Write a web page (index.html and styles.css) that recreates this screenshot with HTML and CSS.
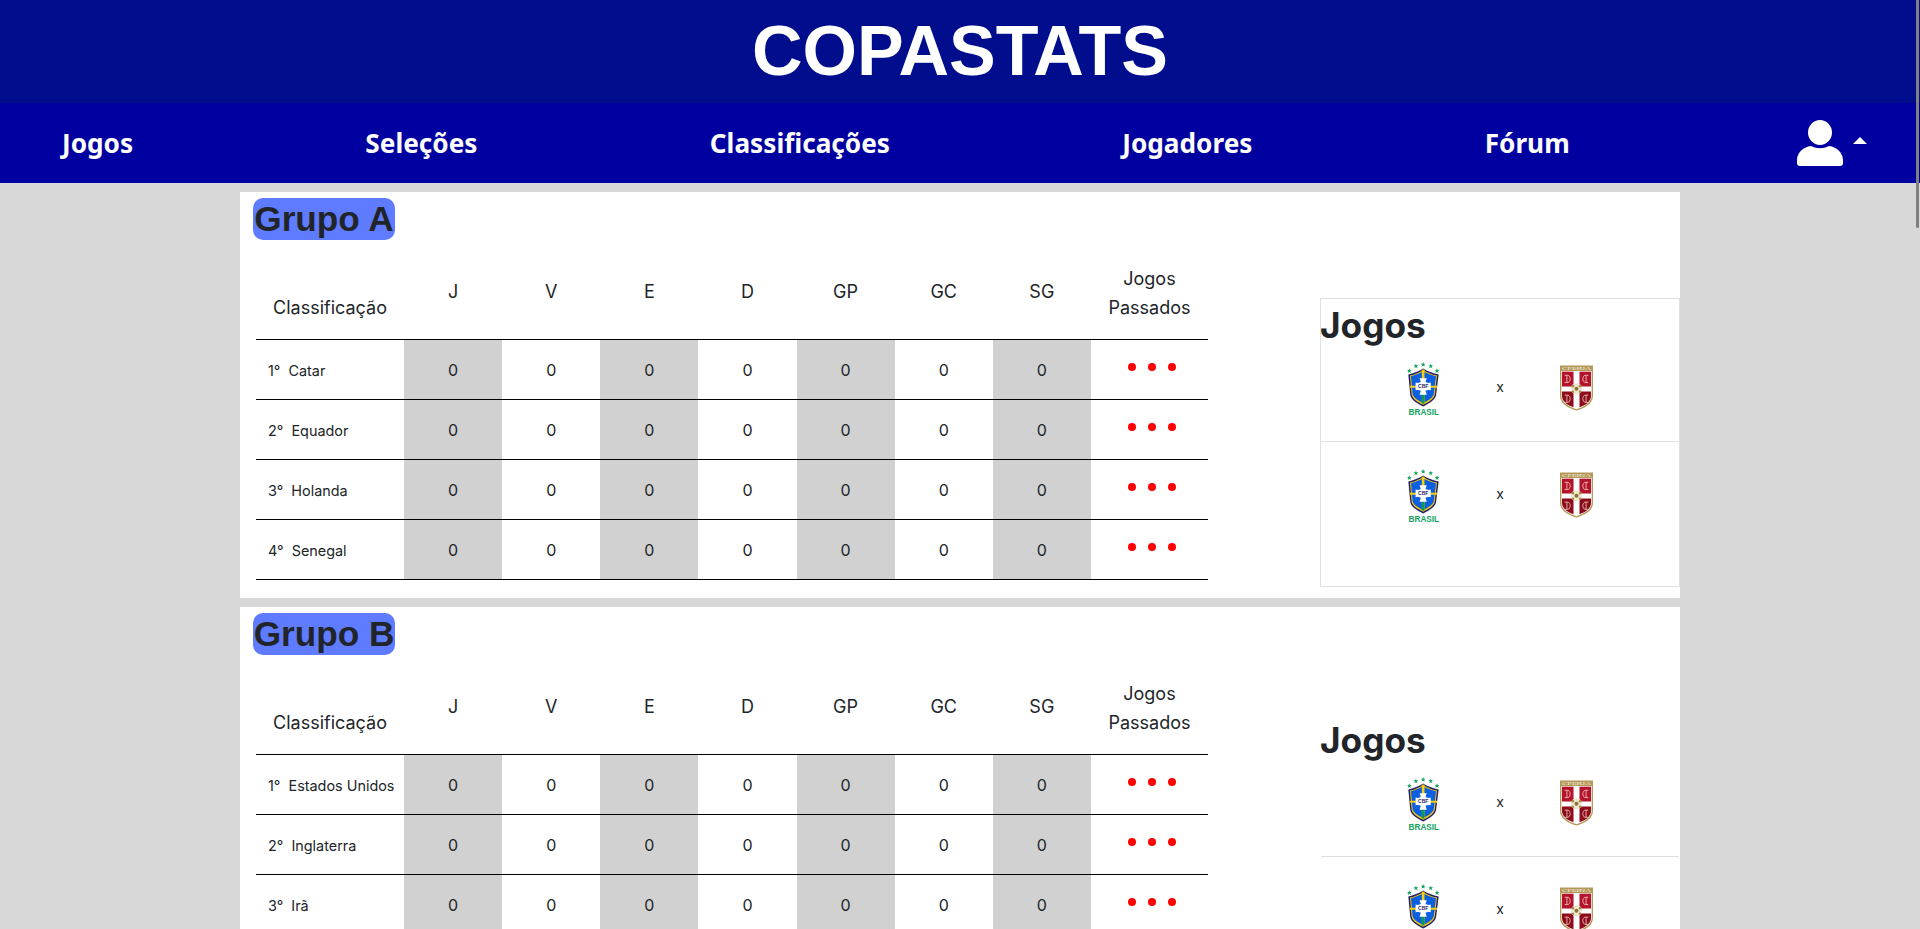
FILE: index.html
```html
<!DOCTYPE html>
<html lang="pt-BR">
<head>
    <meta charset="UTF-8">
    <meta name="viewport" content="width=device-width, initial-scale=1.0">
    <title>Copastats</title>
    <link rel="stylesheet" href="styles.css">
</head>
<body>
    <!-- escudos usados nos jogos -->
    <svg class="defs" width="0" height="0" aria-hidden="true">
        <defs>
            <g id="crest-brasil">
                <g fill="#12a35f">
                    <polygon points="6,18 8,23 13,23 9,27 11,32 6,29 1,32 3,27 -1,23 4,23"/>
                    <polygon points="26,4 28,9 33,9 29,13 31,18 26,15 21,18 23,13 19,9 24,9"/>
                    <polygon points="48,-1 50,4 55,4 51,8 53,13 48,10 43,13 45,8 41,4 46,4"/>
                    <polygon points="71,4 73,9 78,9 74,13 76,18 71,15 66,18 68,13 64,9 69,9"/>
                    <polygon points="90,18 92,23 97,23 93,27 95,32 90,29 85,32 87,27 83,23 88,23"/>
                </g>
                <path d="M48 19C36 27 18 34 3 37L9 100C12 115 32 126 48 134C64 126 84 115 87 100L95 37C78 34 60 27 48 19Z" fill="#221f6b"/>
                <path d="M48 23C37 30 22 37 8 40L13 98C16 112 35 122 48 129C61 122 80 112 83 98L90 40C74 37 59 30 48 23Z" fill="#f2c811"/>
                <path d="M48 27C38 33 24 39 11 42L16 97C19 109 37 118 48 124C59 118 77 109 80 97L87 42C72 39 58 33 48 27Z" fill="#0b5fe0"/>
                <rect x="44" y="22" width="8" height="103" fill="#f7cf12"/>
                <rect x="44" y="92" width="8" height="33" fill="#0c9a4e"/>
                <rect x="8" y="71" width="82" height="6" fill="#f7cf12"/>
                <path d="M37 48H59L55 60C60 63 66 63 71 61V85C66 83 60 83 55 86L59 98H37L41 86C36 83 30 83 25 85V61C30 63 36 63 41 60Z" fill="#fff"/>
            </g>
            <g id="crest-servia">
                <path d="M0 0H100V92C100 118 72 130 50 137C28 130 0 118 0 92Z" fill="#b3985a"/>
                <path d="M4 17H96V92C96 114 70 126 50 133C30 126 4 114 4 92Z" fill="#fff"/>
                <path d="M6 19H41V64H6Z" fill="#b5132b"/>
                <path d="M59 19H94V64H59Z" fill="#b5132b"/>
                <path d="M6 79H41V127C27 122 6 112 6 92Z" fill="#8e0b1c"/>
                <path d="M59 79H94V92C94 112 73 122 59 127Z" fill="#8e0b1c"/>
                <g fill="none" stroke="#e8c9c0" stroke-width="2.5">
                    <path d="M14 30H24C33 32 33 50 24 52H14M21 30V52"/>
                    <path d="M86 30H76C67 32 67 50 76 52H86M79 30V52"/>
                    <path d="M14 90H24C33 92 33 110 24 112H14M21 90V112"/>
                    <path d="M86 90H76C67 92 67 110 76 112H86M79 90V112"/>
                </g>
                <circle cx="50" cy="71" r="17" fill="#efe7d2"/>
                <circle cx="50" cy="71" r="6" fill="#8a7434"/>
                <g fill="#a48c4c">
                    <circle cx="39" cy="63" r="4"/>
                    <circle cx="61" cy="63" r="4"/>
                    <circle cx="39" cy="80" r="4"/>
                    <circle cx="61" cy="80" r="4"/>
                </g>
            </g>
        </defs>
    </svg>

    <header class="topo">
        <h1 class="logo">COPASTATS</h1>
    </header>

    <nav class="menu">
        <a href="#">Jogos</a>
        <a href="#">Seleções</a>
        <a href="#">Classificações</a>
        <a href="#">Jogadores</a>
        <a href="#">Fórum</a>
        <div class="usuario">
            <svg class="usuario-icone" viewBox="0 0 46 46" aria-hidden="true">
                <ellipse cx="23" cy="12.5" rx="12" ry="12.5" fill="#fff"/>
                <path d="M14 26C6 27 0 33 0 40V43C0 45 1 46 3 46H43C45 46 46 45 46 43V40C46 33 40 27 32 26C26 29 20 29 14 26Z" fill="#fff"/>
            </svg>
            <span class="seta"></span>
        </div>
    </nav>

    <main class="conteudo">
        <section class="grupo">
            <div class="grupo-tabela">
                <h2 class="grupo-titulo">Grupo A</h2>
                <table class="tabela">
                    <colgroup>
                        <col class="col-nome"><col class="col-num"><col class="col-num"><col class="col-num"><col class="col-num"><col class="col-num"><col class="col-num"><col class="col-num"><col class="col-jogos">
                    </colgroup>
                    <thead>
                        <tr>
                            <th class="th-nome">Classificação</th>
                            <th>J</th><th>V</th><th>E</th><th>D</th><th>GP</th><th>GC</th><th>SG</th>
                            <th class="th-jogos">Jogos<br>Passados</th>
                        </tr>
                    </thead>
                    <tbody>
                        <tr>
                            <td class="nome">1°&nbsp; Catar</td>
                            <td class="cinza">0</td><td>0</td><td class="cinza">0</td><td>0</td><td class="cinza">0</td><td>0</td><td class="cinza">0</td>
                            <td><div class="pontos"><span></span><span></span><span></span></div></td>
                        </tr>
                        <tr>
                            <td class="nome">2°&nbsp; Equador</td>
                            <td class="cinza">0</td><td>0</td><td class="cinza">0</td><td>0</td><td class="cinza">0</td><td>0</td><td class="cinza">0</td>
                            <td><div class="pontos"><span></span><span></span><span></span></div></td>
                        </tr>
                        <tr>
                            <td class="nome">3°&nbsp; Holanda</td>
                            <td class="cinza">0</td><td>0</td><td class="cinza">0</td><td>0</td><td class="cinza">0</td><td>0</td><td class="cinza">0</td>
                            <td><div class="pontos"><span></span><span></span><span></span></div></td>
                        </tr>
                        <tr>
                            <td class="nome">4°&nbsp; Senegal</td>
                            <td class="cinza">0</td><td>0</td><td class="cinza">0</td><td>0</td><td class="cinza">0</td><td>0</td><td class="cinza">0</td>
                            <td><div class="pontos"><span></span><span></span><span></span></div></td>
                        </tr>
                    </tbody>
                </table>
            </div>
            <aside class="jogos jogos-borda">
                <h2 class="jogos-titulo">Jogos</h2>
                <div class="jogo jogo-primeiro">
                    <svg class="escudo-brasil" viewBox="-1 -1 100 171"><use href="#crest-brasil"/><text class="crest-cbf" x="48" y="79" text-anchor="middle">CBF</text><text class="crest-nome" x="50" y="161" text-anchor="middle">BRASIL</text></svg>
                    <span class="versus">x</span>
                    <svg class="escudo-servia" viewBox="0 0 100 137"><use href="#crest-servia"/><text class="crest-srbija" x="50" y="13" text-anchor="middle" textLength="88" lengthAdjust="spacingAndGlyphs">СРБИЈА</text></svg>
                </div>
                <div class="jogo">
                    <svg class="escudo-brasil" viewBox="-1 -1 100 171"><use href="#crest-brasil"/><text class="crest-cbf" x="48" y="79" text-anchor="middle">CBF</text><text class="crest-nome" x="50" y="161" text-anchor="middle">BRASIL</text></svg>
                    <span class="versus">x</span>
                    <svg class="escudo-servia" viewBox="0 0 100 137"><use href="#crest-servia"/><text class="crest-srbija" x="50" y="13" text-anchor="middle" textLength="88" lengthAdjust="spacingAndGlyphs">СРБИЈА</text></svg>
                </div>
            </aside>
        </section>

        <section class="grupo">
            <div class="grupo-tabela">
                <h2 class="grupo-titulo">Grupo B</h2>
                <table class="tabela">
                    <colgroup>
                        <col class="col-nome"><col class="col-num"><col class="col-num"><col class="col-num"><col class="col-num"><col class="col-num"><col class="col-num"><col class="col-num"><col class="col-jogos">
                    </colgroup>
                    <thead>
                        <tr>
                            <th class="th-nome">Classificação</th>
                            <th>J</th><th>V</th><th>E</th><th>D</th><th>GP</th><th>GC</th><th>SG</th>
                            <th class="th-jogos">Jogos<br>Passados</th>
                        </tr>
                    </thead>
                    <tbody>
                        <tr>
                            <td class="nome">1°&nbsp; Estados Unidos</td>
                            <td class="cinza">0</td><td>0</td><td class="cinza">0</td><td>0</td><td class="cinza">0</td><td>0</td><td class="cinza">0</td>
                            <td><div class="pontos"><span></span><span></span><span></span></div></td>
                        </tr>
                        <tr>
                            <td class="nome">2°&nbsp; Inglaterra</td>
                            <td class="cinza">0</td><td>0</td><td class="cinza">0</td><td>0</td><td class="cinza">0</td><td>0</td><td class="cinza">0</td>
                            <td><div class="pontos"><span></span><span></span><span></span></div></td>
                        </tr>
                        <tr>
                            <td class="nome">3°&nbsp; Irã</td>
                            <td class="cinza">0</td><td>0</td><td class="cinza">0</td><td>0</td><td class="cinza">0</td><td>0</td><td class="cinza">0</td>
                            <td><div class="pontos"><span></span><span></span><span></span></div></td>
                        </tr>
                    </tbody>
                </table>
            </div>
            <aside class="jogos">
                <h2 class="jogos-titulo">Jogos</h2>
                <div class="jogo jogo-primeiro">
                    <svg class="escudo-brasil" viewBox="-1 -1 100 171"><use href="#crest-brasil"/><text class="crest-cbf" x="48" y="79" text-anchor="middle">CBF</text><text class="crest-nome" x="50" y="161" text-anchor="middle">BRASIL</text></svg>
                    <span class="versus">x</span>
                    <svg class="escudo-servia" viewBox="0 0 100 137"><use href="#crest-servia"/><text class="crest-srbija" x="50" y="13" text-anchor="middle" textLength="88" lengthAdjust="spacingAndGlyphs">СРБИЈА</text></svg>
                </div>
                <div class="jogo">
                    <svg class="escudo-brasil" viewBox="-1 -1 100 171"><use href="#crest-brasil"/><text class="crest-cbf" x="48" y="79" text-anchor="middle">CBF</text><text class="crest-nome" x="50" y="161" text-anchor="middle">BRASIL</text></svg>
                    <span class="versus">x</span>
                    <svg class="escudo-servia" viewBox="0 0 100 137"><use href="#crest-servia"/><text class="crest-srbija" x="50" y="13" text-anchor="middle" textLength="88" lengthAdjust="spacingAndGlyphs">СРБИЈА</text></svg>
                </div>
            </aside>
        </section>
    </main>

    <div class="barra-rolagem"></div>
</body>
</html>
```

FILE: styles.css
```css
* {
    box-sizing: border-box;
}
body {
    margin: 0;
    height: 100vh;
    overflow: hidden;
    background-color: #d8d8d8;
    color: #212529;
    font-family: Inter, "Liberation Sans", sans-serif;
    font-size: 16px;
}
.defs {
    position: absolute;
}

.topo {
    height: 103px;
    background-color: #000e8e;
    text-align: center;
}
.logo {
    margin: 0;
    color: white;
    font-family: "Liberation Sans", Arial, sans-serif;
    font-size: 70px;
    font-weight: bold;
    line-height: 103px;
}

.menu {
    height: 80px;
    padding: 0 53px 0 62px;
    display: flex;
    align-items: center;
    justify-content: space-between;
    background-color: #0000a0;
}
.menu a {
    color: white;
    font-family: "Noto Sans", sans-serif;
    font-size: 26.2px;
    font-weight: bold;
    text-decoration: none;
}
.usuario {
    display: flex;
    align-items: flex-start;
    gap: 10px;
    height: 46px;
    margin-left: -5px;
}
.usuario-icone {
    width: 46px;
    height: 46px;
}
.seta {
    margin-top: 17px;
    border-left: 7px solid transparent;
    border-right: 7px solid transparent;
    border-bottom: 7px solid white;
}

.conteudo {
    padding: 9px 240px 0;
    display: flex;
    flex-direction: column;
    gap: 9px;
}
.grupo {
    flex: none;
    height: 406px;
    padding: 6px 0 0 13px;
    display: flex;
    justify-content: space-between;
    background-color: white;
}
.grupo-titulo {
    display: inline-block;
    width: 142px;
    margin: 0;
    background-color: #5f7bff;
    border-radius: 10px;
    font-family: "Liberation Sans", Arial, sans-serif;
    font-size: 35.2px;
    font-weight: bold;
    line-height: 42px;
    text-align: center;
    vertical-align: top;
}

.tabela {
    display: table;
    width: 952px;
    margin: 16px 0 0 3px;
    border-collapse: collapse;
    table-layout: fixed;
}
.col-nome {
    width: 148px;
}
.col-num {
    width: 98.14px;
}
.col-jogos {
    width: 117px;
}
.tabela th {
    height: 83px;
    padding: 8px 0 20px;
    border-bottom: 1px solid black;
    font-size: 18px;
    font-weight: normal;
    line-height: 29px;
    text-align: center;
    vertical-align: middle;
}
.tabela th.th-nome {
    padding-top: 37px;
    padding-bottom: 16px;
}
.tabela th.th-jogos {
    padding-bottom: 16px;
}
.tabela td {
    height: 60px;
    padding: 2px 0 0;
    border-bottom: 1px solid black;
    text-align: center;
}
.tabela td.cinza {
    background-color: #d1d1d1;
}
.tabela td.nome {
    padding-left: 12px;
    font-size: 14.4px;
    text-align: left;
    white-space: nowrap;
}
.pontos {
    display: flex;
    justify-content: center;
    gap: 12px;
    padding: 0 0 7px 5px;
}
.pontos span {
    width: 8px;
    height: 8px;
    border-radius: 50%;
    background-color: red;
}

.jogos {
    width: 360px;
    height: 289px;
    margin-top: 100px;
    border: 1px solid transparent;
}
.jogos-borda {
    border-color: #dee2e6;
}
.jogos-titulo {
    margin: 5px 0 0 -1px;
    font-size: 35.2px;
    font-weight: bold;
    line-height: 42px;
}
.jogo {
    display: grid;
    grid-template-columns: repeat(3, 76.5px);
    justify-content: center;
    justify-items: center;
    align-items: center;
    padding-top: 27px;
    font-size: 14px;
}
.jogo-primeiro {
    padding-top: 16px;
    padding-bottom: 25px;
    border-bottom: 1px solid #dee2e6;
}
.versus {
    padding-bottom: 5px;
}
.escudo-brasil {
    width: 33px;
    height: 56.4px;
    margin-bottom: -2.4px;
}
.escudo-servia {
    width: 33px;
    height: 46px;
    margin-bottom: 2px;
}
.crest-cbf {
    fill: #221f6b;
    font-family: "Liberation Sans", sans-serif;
    font-size: 15px;
    font-weight: bold;
}
.crest-nome {
    fill: #12a35f;
    font-family: "Liberation Sans", sans-serif;
    font-size: 25px;
    font-weight: bold;
}
.crest-srbija {
    fill: #f5eedc;
    font-family: "Liberation Serif", serif;
    font-size: 15px;
}

/* barra de rolagem da pagina */
.barra-rolagem {
    position: fixed;
    top: 0;
    right: 1px;
    width: 3px;
    height: 228px;
    background-color: #808080;
    border-radius: 0 0 2px 2px;
}
```
